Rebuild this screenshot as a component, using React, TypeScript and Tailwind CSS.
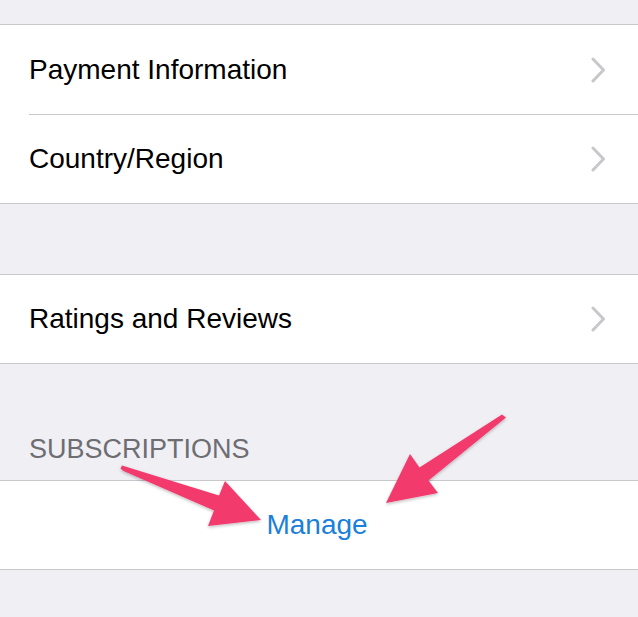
import React from 'react';

const font = { fontFamily: '"Liberation Sans", Arial, sans-serif' };

function Chevron() {
  return (
    <svg width="16" height="26" viewBox="0 0 16 26" className="shrink-0">
      <polyline points="2,2 12.5,13 2,24" fill="none" stroke="#c7c7cc" strokeWidth="3" strokeLinecap="round" strokeLinejoin="round" />
    </svg>
  );
}

function Row({ label, last }: { label: string; last?: boolean }) {
  return (
    <div className="pl-[29px]">
      <div className={`flex items-center justify-between pr-[31px] ${last ? 'h-[88px]' : 'h-[90px] border-b border-[#c8c7cc]'}`}>
        <span className="text-[28px] leading-[32px] text-black">{label}</span>
        <Chevron />
      </div>
    </div>
  );
}

export default function App() {
  return (
    <div className="relative w-[638px] h-[617px] overflow-hidden bg-[#efeff4]" style={font}>
      {/* top group */}
      <div className="h-[24px]" />
      <div className="bg-white border-y border-[#c8c7cc]">
        <Row label="Payment Information" />
        <Row label="Country/Region" last />
      </div>

      <div className="h-[70px]" />
      <div className="bg-white border-y border-[#c8c7cc]">
        <Row label="Ratings and Reviews" last />
      </div>

      {/* subscriptions */}
      <div className="h-[116px] flex items-end pb-[15px] pl-[29px]">
        <span className="text-[27px] leading-[32px] text-[#6d6d72]">SUBSCRIPTIONS</span>
      </div>
      <div className="bg-white border-y border-[#c8c7cc]">
        <div className="h-[88px] flex items-center justify-center">
          <span className="text-[28px] leading-[32px] text-[#1a80d9] mr-[4px]">Manage</span>
        </div>
      </div>

      {/* annotation arrows */}
      <svg className="absolute inset-0 pointer-events-none" width="638" height="617" viewBox="0 0 638 617">
        <defs>
          <filter id="sh" x="-10%" y="-10%" width="120%" height="130%">
            <feDropShadow dx="0" dy="1.5" stdDeviation="1.5" floodColor="#000" floodOpacity="0.25" />
          </filter>
        </defs>
        <g fill="#f23a6c" filter="url(#sh)">
          <polygon points="122,465.5 219,495.5 225,481 261,520 208,526 214,510.5 123.5,471 120.5,468.5" />
          <polygon points="502,414.5 506,417.5 428.5,480.5 438,493 386,503 410,454 419.5,467.5" />
        </g>
      </svg>
    </div>
  );
}
